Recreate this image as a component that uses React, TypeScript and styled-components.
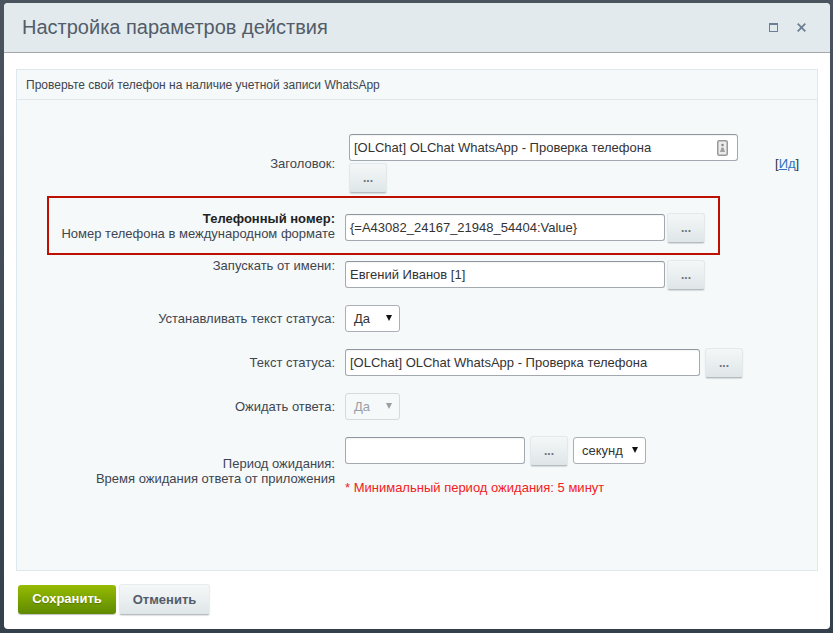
import React from "react";
import styled, { createGlobalStyle } from "styled-components";

const Global = createGlobalStyle`
  html, body { margin: 0; padding: 0; background: #3d4a56; }
  body { width: 833px; height: 633px; overflow: hidden; font-family: "Liberation Sans", Arial, sans-serif; }
  *, *::before, *::after { box-sizing: border-box; }
`;

const Backdrop = styled.div`
  width: 833px;
  height: 633px;
  padding: 3px 3px 4px 4px;
  background: linear-gradient(#4a545e, #34414d);
`;

const Dialog = styled.div`
  height: 626px;
  background: #fff;
  border-radius: 4px;
  display: flex;
  flex-direction: column;
  overflow: hidden;
`;

const Header = styled.header`
  height: 50px;
  flex: none;
  background: #e2eaed;
  border-bottom: 1px solid #a5a8aa;
  display: flex;
  align-items: center;
  padding: 0 24px 0 18px;
`;

const Title = styled.h1`
  margin: 0;
  flex: 1;
  font-size: 20px;
  font-weight: 400;
  color: #535c69;
`;

const HeaderIcons = styled.div`
  display: flex;
  align-items: center;
  gap: 19px;
`;

const Content = styled.main`
  flex: 1;
  padding: 16px 12px 0;
  display: flex;
  flex-direction: column;
`;

const Panel = styled.section`
  height: 502px;
  flex: none;
  background: #f5f9f9;
  border: 1px solid #dfe8ec;
`;

const PanelHead = styled.div`
  height: 30px;
  border-bottom: 1px solid #dfe8ec;
  padding-left: 9px;
  display: flex;
  align-items: center;
  font-size: 12px;
  color: #3f4550;
`;

const Form = styled.div`
  padding-top: 34px;
  display: flex;
  flex-direction: column;
`;

const Row = styled.div<{ $top?: number; $marked?: boolean }>`
  position: relative;
  display: grid;
  grid-template-columns: 318px 1fr;
  column-gap: 10px;
  align-items: center;
  margin-top: ${(p) => p.$top ?? 0}px;
  ${(p) =>
    p.$marked
      ? `&::after {
    content: "";
    position: absolute;
    left: 30px;
    top: -17px;
    width: 673px;
    height: 59px;
    border: 2px solid #bd1000;
    pointer-events: none;
  }`
      : ""}
`;

const Label = styled.div<{ $shift?: number }>`
  text-align: right;
  font-size: 13px;
  line-height: 15px;
  color: #3f4550;
  position: relative;
  top: ${(p) => p.$shift ?? 0}px;
  b { color: #222; }
`;

const Field = styled.div<{ $gap?: number }>`
  display: flex;
  align-items: flex-start;
  gap: ${(p) => p.$gap ?? 2}px;
`;

const TitleField = styled.div`
  display: flex;
  align-items: center;
`;

const Stack = styled.div`
  display: flex;
  flex-direction: column;
  align-items: flex-start;
  gap: 2px;
  margin-left: 4px;
  width: 389px;
`;

const InputBox = styled.div<{ $w: number; $flush?: boolean }>`
  position: relative;
  width: ${(p) => p.$w}px;
  height: 27px;
  margin-top: ${(p) => (p.$flush ? 0 : 1)}px;
  background: #fff;
  border: 1px solid #a3a9b0;
  border-top-color: #8f96a0;
  border-radius: 3px;
  box-shadow: inset 0 1px 1px rgba(0, 0, 0, 0.05);
  font-size: 13px;
  line-height: 25px;
  padding-left: 4px;
  color: #333;
  flex: none;
  white-space: nowrap;
`;

const AddressIcon = styled.svg`
  position: absolute;
  right: 9px;
  top: 5px;
`;

const DotsButton = styled.div`
  width: 38px;
  height: 30px;
  flex: none;
  border-radius: 3px;
  border: 1px solid #e3e8ea;
  border-bottom-color: #b4bcc1;
  background: linear-gradient(#f4f7f8, #dfe6e8);
  box-shadow: 0 1px 1px rgba(0, 0, 0, 0.12);
  color: #6a727c;
  font-size: 12px;
  font-weight: 700;
  text-align: center;
  line-height: 28px;
`;

const Select = styled.div<{ $w: number; $disabled?: boolean; $top?: number }>`
  width: ${(p) => p.$w}px;
  height: 27px;
  flex: none;
  margin-top: ${(p) => p.$top ?? 0}px;
  background: ${(p) => (p.$disabled ? "#f5f9f9" : "#fff")};
  border: 1px solid ${(p) => (p.$disabled ? "#d5dadd" : "#a9afb5")};
  border-radius: 3px;
  display: flex;
  align-items: center;
  justify-content: space-between;
  padding: 0 7px 0 8px;
  font-size: 13px;
  color: ${(p) => (p.$disabled ? "#9a9fa5" : "#333")};
`;

const Arrow = styled.span<{ $disabled?: boolean }>`
  width: 0;
  height: 0;
  border-left: 3.5px solid transparent;
  border-right: 3.5px solid transparent;
  border-top: 6px solid ${(p) => (p.$disabled ? "#9a9fa5" : "#111")};
  margin-top: -2px;
`;

const IdLink = styled.div`
  font-size: 13px;
  color: #333;
  margin-left: 37px;
  a { color: #2f72c0; text-decoration: underline; }
`;

const PeriodCol = styled.div`
  display: flex;
  flex-direction: column;
  gap: 14px;
`;

const Hint = styled.div`
  font-size: 13px;
  line-height: 15px;
  color: #f32020;
`;

const Footer = styled.footer`
  display: flex;
  align-items: center;
  gap: 3px;
  margin-top: 13px;
  padding-left: 2px;
`;

const SaveButton = styled.div`
  width: 98px;
  height: 29px;
  border-radius: 3px;
  background: linear-gradient(#96bb00, #5f8a00);
  box-shadow: 0 1px 1px rgba(0, 0, 0, 0.25);
  color: #fff;
  font-size: 13px;
  font-weight: 700;
  text-align: center;
  line-height: 28px;
  text-shadow: 0 1px 1px rgba(0, 0, 0, 0.25);
`;

const CancelButton = styled.div`
  width: 91px;
  height: 31px;
  border-radius: 3px;
  border: 1px solid #e8ecee;
  border-bottom-color: #b4bcc1;
  background: linear-gradient(#f6f8f9, #dfe6e8);
  box-shadow: 0 1px 1px rgba(0, 0, 0, 0.12);
  color: #535c69;
  font-size: 13px;
  font-weight: 700;
  text-align: center;
  line-height: 29px;
`;

export default function App() {
  return (
    <Backdrop>
      <Global />
      <Dialog>
        <Header>
          <Title>Настройка параметров действия</Title>
          <HeaderIcons>
            <svg width="9" height="9" viewBox="0 0 9 9">
              <rect x="0.5" y="0.5" width="8" height="8" fill="none" stroke="#6c7f94" strokeWidth="1" />
              <rect x="0.5" y="0.5" width="8" height="1.5" fill="#6c7f94" />
            </svg>
            <svg width="9" height="9" viewBox="0 0 9 9">
              <path d="M0.7 0.7 L8.3 8.3 M8.3 0.7 L0.7 8.3" stroke="#6c7f94" strokeWidth="1.8" />
            </svg>
          </HeaderIcons>
        </Header>
        <Content>
          <Panel>
            <PanelHead>Проверьте свой телефон на наличие учетной записи WhatsApp</PanelHead>
            <Form>
              <Row>
                <Label>Заголовок:</Label>
                <TitleField>
                  <Stack>
                    <InputBox $w={389} $flush>
                      [OLChat] OLChat WhatsApp - Проверка телефона
                      <AddressIcon width="11" height="16" viewBox="0 0 11 16">
                        <rect x="0.75" y="0.75" width="9.5" height="14.5" rx="1.5" fill="#ececec" stroke="#999" strokeWidth="1.5" />
                        <circle cx="5.5" cy="5" r="1.3" fill="#8a8a8a" />
                        <path d="M3 12 L4.5 7.5 H6.5 L8 12 Z" fill="#a0a0a0" />
                      </AddressIcon>
                    </InputBox>
                    <DotsButton>...</DotsButton>
                  </Stack>
                  <IdLink>
                    [<a>Ид</a>]
                  </IdLink>
                </TitleField>
              </Row>
              <Row $top={20} $marked>
                <Label $shift={-2}>
                  <b>Телефонный номер:</b>
                  <br />
                  Номер телефона в международном формате
                </Label>
                <Field>
                  <InputBox $w={320}>{"{=A43082_24167_21948_54404:Value}"}</InputBox>
                  <DotsButton>...</DotsButton>
                </Field>
              </Row>
              <Row $top={17}>
                <Label $shift={-10}>Запускать от имени:</Label>
                <Field>
                  <InputBox $w={320}>Евгений Иванов [1]</InputBox>
                  <DotsButton>...</DotsButton>
                </Field>
              </Row>
              <Row $top={15}>
                <Label>Устанавливать текст статуса:</Label>
                <Field>
                  <Select $w={55}>
                    Да
                    <Arrow />
                  </Select>
                </Field>
              </Row>
              <Row $top={16}>
                <Label $shift={-1}>Текст статуса:</Label>
                <Field $gap={5}>
                  <InputBox $w={355}>[OLChat] OLChat WhatsApp - Проверка телефона</InputBox>
                  <DotsButton>...</DotsButton>
                </Field>
              </Row>
              <Row $top={15}>
                <Label>Ожидать ответа:</Label>
                <Field>
                  <Select $w={55} $disabled>
                    Да
                    <Arrow $disabled />
                  </Select>
                </Field>
              </Row>
              <Row $top={16}>
                <Label $shift={5}>
                  Период ожидания:
                  <br />
                  Время ожидания ответа от приложения
                </Label>
                <PeriodCol>
                  <Field $gap={5}>
                    <InputBox $w={180} />
                    <DotsButton>...</DotsButton>
                    <Select $w={73} $top={1}>
                      секунд
                      <Arrow />
                    </Select>
                  </Field>
                  <Hint>* Минимальный период ожидания: 5 минут</Hint>
                </PeriodCol>
              </Row>
            </Form>
          </Panel>
          <Footer>
            <SaveButton>Сохранить</SaveButton>
            <CancelButton>Отменить</CancelButton>
          </Footer>
        </Content>
      </Dialog>
    </Backdrop>
  );
}
